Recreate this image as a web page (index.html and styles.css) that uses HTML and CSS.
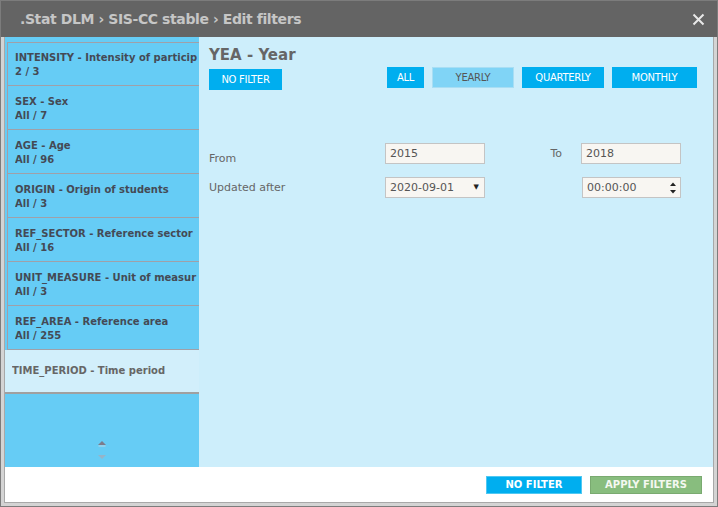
FILE: index.html
```html
<!DOCTYPE html>
<html>
<head>
<meta charset="utf-8">
<link rel="stylesheet" href="styles.css">
</head>
<body>
<div class="window">
  <div class="header">
    <div class="title">.Stat DLM › SIS-CC stable › Edit filters</div>
    <div class="close">
      <svg width="13" height="13" viewBox="0 0 13 13"><path d="M1.5 1.5 L11.5 11.5 M11.5 1.5 L1.5 11.5" stroke="#e8e8e8" stroke-width="2" fill="none"/></svg>
    </div>
  </div>
  <div class="inner">
    <div class="content">
      <div class="sidebar">
        <div class="items">
          <div class="item"><div class="name">INTENSITY - Intensity of particip</div><div class="count">2 / 3</div></div>
          <div class="item"><div class="name">SEX - Sex</div><div class="count">All / 7</div></div>
          <div class="item"><div class="name">AGE - Age</div><div class="count">All / 96</div></div>
          <div class="item"><div class="name">ORIGIN - Origin of students</div><div class="count">All / 3</div></div>
          <div class="item"><div class="name">REF_SECTOR - Reference sector</div><div class="count">All / 16</div></div>
          <div class="item"><div class="name">UNIT_MEASURE - Unit of measur</div><div class="count">All / 3</div></div>
          <div class="item"><div class="name">REF_AREA - Reference area</div><div class="count">All / 255</div></div>
          <div class="item selected"><div class="name">TIME_PERIOD - Time period</div></div>
        </div>
        <div class="scroller">
          <svg width="10" height="22" viewBox="0 0 10 22"><path d="M1 6 L5 2 L9 6 Z" fill="#7c7c8c"/><path d="M1.5 7 L8.5 7" stroke="#b8d8e8" stroke-width="1"/><path d="M1 16 L9 16 L5 20 Z" fill="#96b4c8"/></svg>
        </div>
      </div>
      <div class="main">
        <div class="dim-title">YEA - Year</div>
        <div class="top-row">
          <button class="btn nofilter">NO FILTER</button>
          <div class="freq">
            <button class="btn all">ALL</button>
            <button class="btn yearly">YEARLY</button>
            <button class="btn quarterly">QUARTERLY</button>
            <button class="btn monthly">MONTHLY</button>
          </div>
        </div>
        <div class="form">
          <div class="row row1">
            <div class="label from">From</div>
            <div class="field">2015</div>
            <div class="label to">To</div>
            <div class="field">2018</div>
          </div>
          <div class="row row2">
            <div class="label">Updated after</div>
            <div class="field select">2020-09-01<span class="caret">▼</span></div>
            <div class="label to"></div>
            <div class="field time">00:00:00
              <svg class="spin" width="8" height="14" viewBox="0 0 8 14"><path d="M1 5 L4 1.5 L7 5 Z" fill="#222"/><path d="M1 9 L7 9 L4 12.5 Z" fill="#222"/></svg>
            </div>
          </div>
        </div>
      </div>
    </div>
    <div class="footer">
      <button class="fbtn fnofilter">NO FILTER</button>
      <button class="fbtn apply">APPLY FILTERS</button>
    </div>
  </div>
</div>
</body>
</html>
```

FILE: styles.css
```css
* { box-sizing: border-box; }
html, body { margin: 0; padding: 0; }
body {
  width: 718px;
  height: 507px;
  font-family: "DejaVu Sans", Verdana, sans-serif;
  background: #fff;
}
.window {
  width: 718px;
  height: 507px;
  border: 1px solid #7c7c7c;
  background: #d4d4d4;
  display: flex;
  flex-direction: column;
}
.header {
  height: 36px;
  background: #646464;
  display: flex;
  align-items: center;
  justify-content: space-between;
  padding: 0 12px 0 19px;
  flex-shrink: 0;
}
.title {
  color: #c6c6c6;
  font-weight: bold;
  font-size: 14px;
  letter-spacing: -0.4px;
}
.close { display: flex; align-items: center; }
.inner {
  flex: 1;
  padding: 0 3px 3px 3px;
  display: flex;
  flex-direction: column;
}
.content {
  flex: 1;
  display: flex;
  border-left: 1px solid #a8a8a8;
  border-right: 1px solid #a8a8a8;
}
.sidebar {
  width: 194px;
  background: #66ccf5;
  display: flex;
  flex-direction: column;
  padding-top: 5px;
}
.items { display: flex; flex-direction: column; }
.item {
  height: 44px;
  margin-left: 2px;
  border: 1px solid #a0a0a8;
  border-right: none;
  border-top: none;
  padding: 9px 0 0 7px;
  font-size: 10px;
  font-weight: bold;
  color: #444a55;
  line-height: 14px;
  overflow: hidden;
  white-space: nowrap;
}
.item:first-child { border-top: 1px solid #a0a0a8; padding-top: 8px; }
.item .name, .item .count { overflow: hidden; white-space: nowrap; }
.item.selected {
  margin-left: 0;
  background: #d2effb;
  color: #666;
  padding: 14px 0 0 7px;
  border-left: none;
  border-bottom: 2px solid #a0a0a0;
}
.scroller {
  flex: 1;
  display: flex;
  align-items: flex-end;
  justify-content: center;
  padding-bottom: 6px;
}
.main {
  flex: 1;
  background: #cdeefb;
  padding: 9px 16px 0 10px;
  color: #666;
}
.dim-title {
  font-size: 15px;
  font-weight: bold;
  color: #666;
  line-height: 18px;
}
.top-row {
  display: flex;
  justify-content: space-between;
  align-items: flex-start;
}
.btn {
  font-family: "DejaVu Sans", Verdana, sans-serif;
  font-size: 10px;
  border: none;
  padding: 0;
  height: 21px;
  color: #fff;
  background: #00aeef;
  cursor: pointer;
  letter-spacing: -0.3px;
}
.nofilter { width: 73px; margin-top: 5px; }
.freq { display: flex; gap: 8px; margin-top: 3px; }
.all { width: 37px; }
.yearly { width: 82px; background: #80d4f6; color: #555; border: 1px solid #a8def4; }
.quarterly { width: 82px; }
.monthly { width: 85px; }
.form { margin-top: 52px; display: flex; flex-direction: column; gap: 12px; }
.row { display: flex; align-items: center; }
.label { font-size: 11px; color: #666; width: 176px; }
.row1 .label.from { padding-top: 10px; }
.label.to { width: 96px; text-align: right; padding-right: 19px; }
.field {
  width: 100px;
  height: 21px;
  background: #f8f6f2;
  border: 1px solid #c4c4c4;
  font-size: 11px;
  color: #555;
  padding: 3px 0 0 4px;
  position: relative;
}
.row2 .field.time { margin-left: 1px; width: 99px; }
.caret {
  position: absolute;
  right: 5px;
  top: 5px;
  font-size: 7px;
  color: #222;
}
.spin { position: absolute; right: 3px; top: 3px; }
.footer {
  height: 36px;
  background: #fff;
  display: flex;
  justify-content: flex-end;
  align-items: center;
  gap: 8px;
  padding-right: 11px;
  border-left: 1px solid #a8a8a8;
  border-right: 1px solid #a8a8a8;
  border-bottom: 1px solid #a8a8a8;
}
.fbtn {
  font-family: "DejaVu Sans", Verdana, sans-serif;
  font-size: 10px;
  font-weight: bold;
  color: #fff;
  border: none;
  height: 18px;
  padding: 0;
}
.fnofilter { width: 96px; background: #00aeef; border: 1px solid #50c8f2; }
.apply { width: 112px; background: #88bd7e; color: #f4f8f0; border: 1px solid #7aaa70; }
```
